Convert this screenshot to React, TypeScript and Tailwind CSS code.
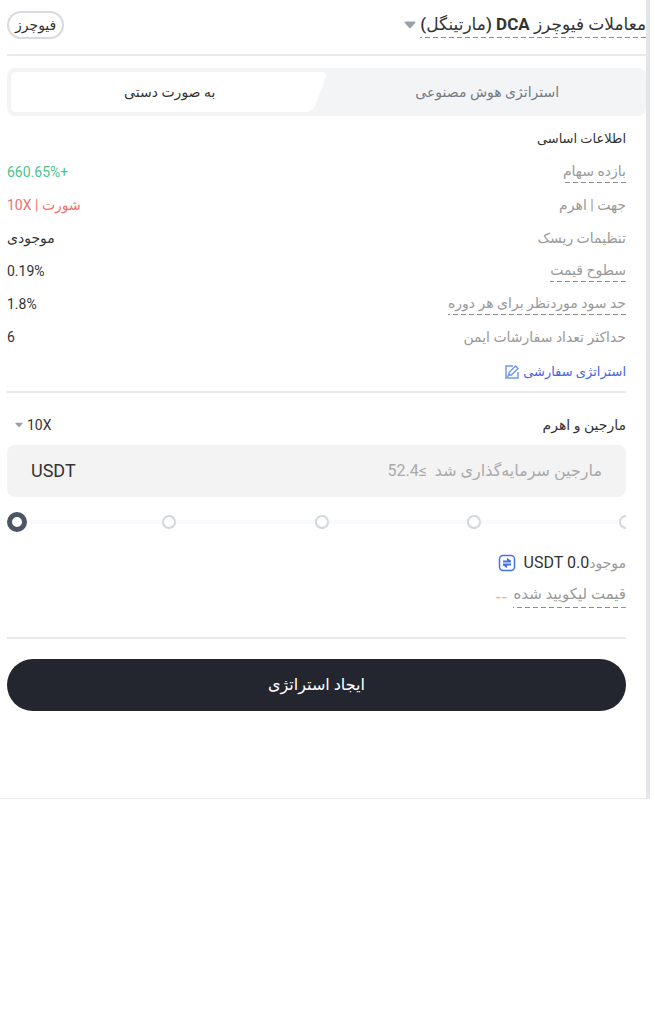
import { useState } from "react";

type Row = {
  label: string;
  value: string;
  hint?: boolean;
  color?: string;
};

const rows: Row[] = [
  { label: "بازده سهام", value: "+660.65%", hint: true, color: "text-[#4cc38a]" },
  { label: "جهت | اهرم", value: "شورت | 10X", color: "text-[#f0716e]" },
  { label: "تنظیمات ریسک", value: "موجودی" },
  { label: "سطوح قیمت", value: "0.19%", hint: true },
  { label: "حد سود موردنظر برای هر دوره", value: "1.8%", hint: true },
  { label: "حداکثر تعداد سفارشات ایمن", value: "6" },
];

const dashed =
  "pb-0.5 bg-[repeating-linear-gradient(to_left,#8c8c8c_0_5px,transparent_5px_8px)] bg-[length:100%_1px] bg-bottom bg-no-repeat";

function Caret({ className }: { className: string }) {
  return (
    <svg className={`shrink-0 ${className}`} viewBox="0 0 12 8" fill="#98a1a8" aria-hidden="true">
      <path d="M1.5 0.5h9c.9 0 1.2.9.6 1.5L7 6.8c-.6.6-1.4.6-2 0L.9 2C.3 1.4.6.5 1.5.5z" />
    </svg>
  );
}

function EditIcon() {
  return (
    <svg className="size-[14px]" viewBox="0 0 14 14" fill="none" stroke="#6c96ea" strokeWidth="1.4" aria-hidden="true">
      <path d="M8 1H1v12h12V7" />
      <path d="M4 10V7.600L10.600 1 13 3.400 6.400 10z" />
      <path d="M2 12l3-3" />
    </svg>
  );
}

function TransferIcon() {
  return (
    <svg className="size-[18px]" viewBox="0 0 18 18" fill="none" stroke="#4672e6" strokeWidth="1.5" aria-hidden="true">
      <rect x="1.5" y="1.5" width="15" height="15" rx="3.5" />
      <path d="M5 7.500h8M5 10.500h8" strokeWidth="2" />
      <path d="M9.500 4.500l3.500 3h-3.500zM8.500 13.500l-3.500-3h3.500z" fill="#4672e6" strokeWidth="1" />
    </svg>
  );
}

function InfoRow({ label, value, hint, color }: Row) {
  return (
    <div className="flex h-[33px] items-center justify-between">
      <dt className={`text-[#999] ${hint ? dashed : ""}`}>{label}</dt>
      <dd className={color ?? "text-[#333]"}>{value}</dd>
    </div>
  );
}

function MarginSlider() {
  const [value, setValue] = useState(0);

  return (
    <div dir="ltr" className="relative flex h-5 items-center overflow-hidden">
      <div className="absolute inset-x-2 h-1 bg-[#f8f9fc]" />
      <div className="-mr-[7px] ml-[3px] flex flex-1 justify-between">
        {[0, 25, 50, 75, 100].map((stop) => (
          <span key={stop} className="relative size-[14px] rounded-full border-2 border-[#d3d6da] bg-white" />
        ))}
      </div>
      <input
        type="range"
        aria-label="مارجین"
        min={0}
        max={100}
        value={value}
        onChange={(e) => setValue(Number(e.target.value))}
        className="absolute inset-0 w-full cursor-pointer appearance-none bg-transparent [&::-webkit-slider-thumb]:size-5 [&::-webkit-slider-thumb]:appearance-none [&::-webkit-slider-thumb]:rounded-full [&::-webkit-slider-thumb]:border-5 [&::-webkit-slider-thumb]:border-[#4b5563] [&::-webkit-slider-thumb]:bg-white"
      />
    </div>
  );
}

function App() {
  const [amount, setAmount] = useState("");

  return (
    <div dir="rtl" lang="fa" className="bg-white pr-[5px] font-['Roboto','DejaVu_Sans',sans-serif] text-sm text-[#333]">
      <main className="border-r-4 border-b border-r-[#e4e5e9] border-b-[#e8e9eb] pb-[87px] pl-[7px]">
        <header className="flex h-14 items-center justify-between border-b-2 border-[#e8e9ec] pb-1">
          <button type="button" className="flex items-center gap-1 text-[17px]">
            <h1 className={`font-medium ${dashed}`}>
              معاملات فیوچرز <b>DCA</b> (مارتینگل)
            </h1>
            <Caret className="h-2 w-3" />
          </button>
          <span className="rounded-full border-2 border-[#d9dadf] px-1.5 py-0.5">فیوچرز</span>
        </header>

        <div role="tablist" className="mt-3 flex h-12 rounded-lg bg-[#f3f4f6] py-1 pl-1">
          <button type="button" role="tab" aria-selected="false" className="flex-1 text-[#777b84]">
            استراتژی هوش مصنوعی
          </button>
          <button type="button" role="tab" aria-selected="true" className="relative flex-1">
            <svg className="absolute inset-0 size-full" viewBox="0 0 318 40" preserveAspectRatio="none" fill="#fff" aria-hidden="true">
              <path d="M6 0H311Q317 0 315 6L305 33Q302 40 295 40H6Q0 40 0 34V6Q0 0 6 0Z" />
            </svg>
            <span className="relative">به صورت دستی</span>
          </button>
        </div>

        <div className="pr-5">
          <section className="border-b-2 border-[#e8e9ec] pt-[7px]">
            <h2 className="flex h-8 items-center text-[13px]">اطلاعات اساسی</h2>
            <dl>
              {rows.map((row) => (
                <InfoRow key={row.label} {...row} />
              ))}
            </dl>
            <button type="button" className="flex h-[38px] items-center gap-1 text-[13px] text-[#4a63e0]">
              استراتژی سفارشی
              <EditIcon />
            </button>
          </section>

          <section className="border-b-2 border-[#e8e9ec] pt-3.5 pb-6">
            <div className="flex h-9 items-center justify-between">
              <label htmlFor="margin">مارجین و اهرم</label>
              <div className="flex items-center gap-1 pl-2">
                <select aria-label="اهرم" className="appearance-none [field-sizing:content]" defaultValue="10X">
                  <option>10X</option>
                </select>
                <Caret className="h-1.5 w-2" />
              </div>
            </div>

            <div className="mt-0.5 flex h-[52px] items-center rounded-lg bg-[#f3f3f3] px-6 text-base">
              <input
                id="margin"
                type="text"
                value={amount}
                onChange={(e) => setAmount(e.target.value)}
                placeholder="مارجین سرمایه‌گذاری شد  ≥52.4"
                className="min-w-0 flex-1 bg-transparent outline-none placeholder:text-[#aaa]"
              />
              <span className="text-lg">USDT</span>
            </div>

            <div className="my-[15px]">
              <MarginSlider />
            </div>

            <div className="flex h-8 items-center">
              <span className="text-[#999]">موجود</span>
              <span className="text-base">USDT 0.0</span>
              <button type="button" aria-label="انتقال" className="mr-2">
                <TransferIcon />
              </button>
            </div>
            <div className="flex h-[34px] items-center gap-1.5">
              <span className={`text-[15px] text-[#999] ${dashed}`}>قیمت لیکویید شده</span>
              <span className="font-['DejaVu_Sans',sans-serif] text-[17px] text-[#f0b48a]">--</span>
            </div>
          </section>

          <button type="button" className="mt-5 h-[52px] w-full rounded-full bg-[#23262f] text-base text-white">
            ایجاد استراتژی
          </button>
        </div>
      </main>
    </div>
  );
}

export default App;
